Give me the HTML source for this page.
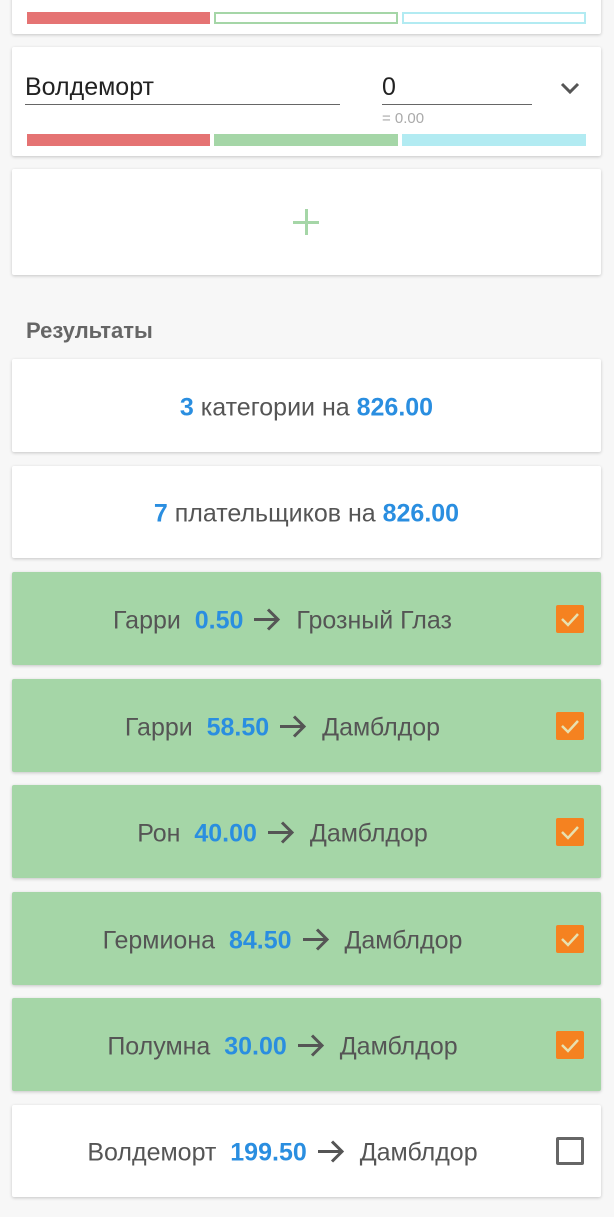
<!DOCTYPE html>
<html><head><meta charset="utf-8"><style>
body{margin:0;width:614px;height:1217px;background:#f7f7f7;font-family:"Liberation Sans",sans-serif;position:relative;overflow:hidden}
.c{position:absolute;left:12px;width:589px;background:#fff;box-shadow:0 1px 3px rgba(0,0,0,.2);border-radius:2px}
.g{background:#a5d6a7}
.t{position:absolute;left:0;right:0;text-align:center;font-size:25px;color:#555;top:50%;margin-top:2px;transform:translateY(-50%);white-space:nowrap}
.g .t,.w .t{right:48px}
.b{color:#2a8ee0;font-weight:bold}
.bar{position:absolute;height:12px}
.cb{position:absolute;left:544px;top:50%;margin-top:-14px;width:28px;height:28px;border-radius:2px}
.ar{display:inline-block;vertical-align:middle;margin:-4px 8px 0 10px}
</style></head><body>
<div class="c" style="top:-10px;height:44px">
<div style="position:absolute;left:380px;top:-4px;font-size:13px;color:#aaa">000.00</div>
<div class="bar" style="left:15px;top:22px;width:183px;background:#e57373"></div>
<div class="bar" style="left:202px;top:22px;width:180px;border:2px solid #a5d6a7;height:8px"></div>
<div class="bar" style="left:390px;top:22px;width:180px;border:2px solid #b2ebf2;height:8px"></div>
</div>
<div class="c" style="top:47px;height:109px">
<div style="position:absolute;left:13px;top:26px;font-size:25px;color:#222">Волдеморт</div>
<div style="position:absolute;left:13px;top:57px;width:315px;height:1px;background:#666"></div>
<div style="position:absolute;left:370px;top:26px;font-size:25px;color:#222">0</div>
<div style="position:absolute;left:370px;top:57px;width:150px;height:1px;background:#666"></div>
<div style="position:absolute;left:370px;top:63px;font-size:15px;color:#aaa">= 0.00</div>
<svg style="position:absolute;left:548px;top:34px" width="20" height="14"><path d="M2 3l8 8 8-8" stroke="#555" stroke-width="3" fill="none"/></svg>
<div class="bar" style="left:15px;top:87px;width:183px;background:#e57373"></div>
<div class="bar" style="left:202px;top:87px;width:184px;background:#a5d6a7"></div>
<div class="bar" style="left:390px;top:87px;width:184px;background:#b2ebf2"></div>
</div>
<div class="c" style="top:169px;height:106px">
<div style="position:absolute;left:281px;top:40px;width:26px;height:26px"><div style="position:absolute;left:12px;top:0;width:3px;height:26px;background:#a5d6a7"></div><div style="position:absolute;top:12px;left:0;height:3px;width:26px;background:#a5d6a7"></div></div>
</div>
<div style="position:absolute;left:26px;top:318px;font-size:22px;font-weight:bold;color:#666">Результаты</div>
<div class="c" style="top:359px;height:93px"><div class="t"><span class="b">3</span> категории на <span class="b">826.00</span></div></div>
<div class="c" style="top:466px;height:92px"><div class="t"><span class="b">7</span> плательщиков на <span class="b">826.00</span></div></div>

<div class="c g" style="top:572px;height:93px"><div class="t">Гарри&nbsp; <span class="b">0.50</span><svg class="ar" width="28" height="24"><path d="M1 12h24M15 2l10 10-10 10" stroke="#555" stroke-width="3" fill="none"/></svg> Грозный Глаз</div><div class="cb" style="background:#f58220"><svg width="28" height="28"><path d="M6 14l6 6 10-11" stroke="#e8e0b0" stroke-width="2.5" fill="none"/></svg></div></div>
<div class="c g" style="top:679px;height:93px"><div class="t">Гарри&nbsp; <span class="b">58.50</span><svg class="ar" width="28" height="24"><path d="M1 12h24M15 2l10 10-10 10" stroke="#555" stroke-width="3" fill="none"/></svg> Дамблдор</div><div class="cb" style="background:#f58220"><svg width="28" height="28"><path d="M6 14l6 6 10-11" stroke="#e8e0b0" stroke-width="2.5" fill="none"/></svg></div></div>
<div class="c g" style="top:785px;height:93px"><div class="t">Рон&nbsp; <span class="b">40.00</span><svg class="ar" width="28" height="24"><path d="M1 12h24M15 2l10 10-10 10" stroke="#555" stroke-width="3" fill="none"/></svg> Дамблдор</div><div class="cb" style="background:#f58220"><svg width="28" height="28"><path d="M6 14l6 6 10-11" stroke="#e8e0b0" stroke-width="2.5" fill="none"/></svg></div></div>
<div class="c g" style="top:892px;height:93px"><div class="t">Гермиона&nbsp; <span class="b">84.50</span><svg class="ar" width="28" height="24"><path d="M1 12h24M15 2l10 10-10 10" stroke="#555" stroke-width="3" fill="none"/></svg> Дамблдор</div><div class="cb" style="background:#f58220"><svg width="28" height="28"><path d="M6 14l6 6 10-11" stroke="#e8e0b0" stroke-width="2.5" fill="none"/></svg></div></div>
<div class="c g" style="top:998px;height:93px"><div class="t">Полумна&nbsp; <span class="b">30.00</span><svg class="ar" width="28" height="24"><path d="M1 12h24M15 2l10 10-10 10" stroke="#555" stroke-width="3" fill="none"/></svg> Дамблдор</div><div class="cb" style="background:#f58220"><svg width="28" height="28"><path d="M6 14l6 6 10-11" stroke="#e8e0b0" stroke-width="2.5" fill="none"/></svg></div></div>
<div class="c w" style="top:1105px;height:92px"><div class="t">Волдеморт&nbsp; <span class="b">199.50</span><svg class="ar" width="28" height="24"><path d="M1 12h24M15 2l10 10-10 10" stroke="#555" stroke-width="3" fill="none"/></svg> Дамблдор</div><div class="cb" style="border:3px solid #666;width:22px;height:22px"></div></div>
</body></html>
